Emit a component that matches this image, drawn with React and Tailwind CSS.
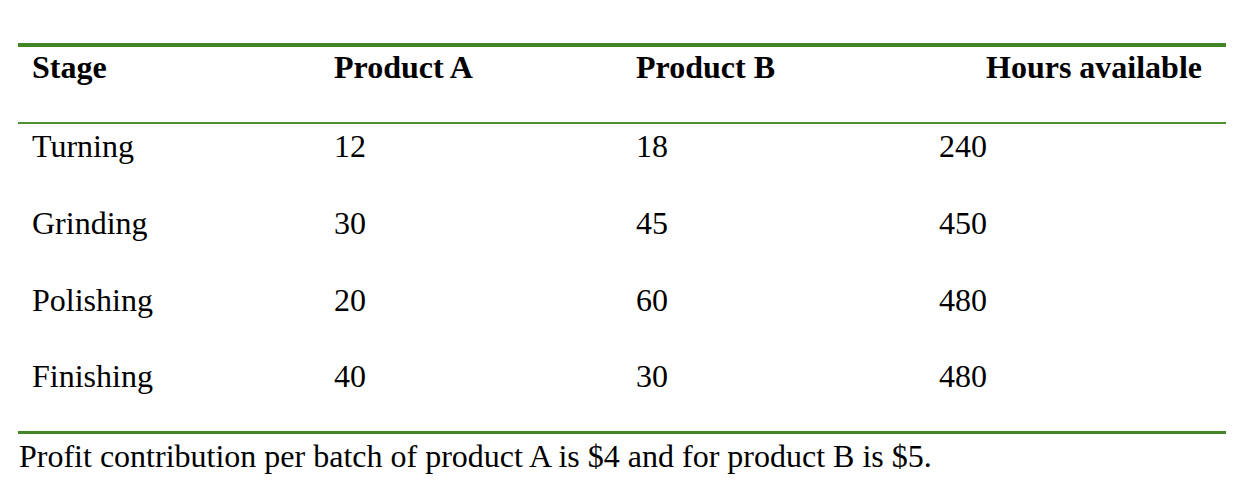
export default function App() {
  const rows = [
    ["Turning", "12", "18", "240"],
    ["Grinding", "30", "45", "450"],
    ["Polishing", "20", "60", "480"],
    ["Finishing", "40", "30", "480"],
  ];
  return (
    <div
      className="w-[1244px] h-[500px] bg-white text-black overflow-hidden"
      style={{ fontFamily: '"Liberation Serif", "Times New Roman", serif' }}
    >
      <div className="pt-[43px] pl-[18px] w-[1226px]">
        <div className="border-t-[4px] border-b-[3px] border-[#438628]">
          <div className="grid grid-cols-4 h-[77px] border-b-[2px] border-[#4f9033] text-[32px] leading-[40px] font-bold">
            <div className="pl-[14px]">Stage</div>
            <div className="pl-[14px]">Product A</div>
            <div className="pl-[14px]">Product B</div>
            <div className="pr-[24px] text-right">Hours available</div>
          </div>
          {rows.map((r) => (
            <div
              key={r[0]}
              className="grid grid-cols-4 h-[76.8px] pt-[4px] text-[32px] leading-[36px]"
            >
              <div className="pl-[14px]">{r[0]}</div>
              <div className="pl-[14px]">{r[1]}</div>
              <div className="pl-[14px]">{r[2]}</div>
              <div className="pl-[15px]">{r[3]}</div>
            </div>
          ))}
        </div>
      </div>
      <p className="pl-[19px] pt-[6px] text-[32px] leading-[32px]">
        Profit contribution per batch of product A is $4 and for product B is $5.
      </p>
    </div>
  );
}
